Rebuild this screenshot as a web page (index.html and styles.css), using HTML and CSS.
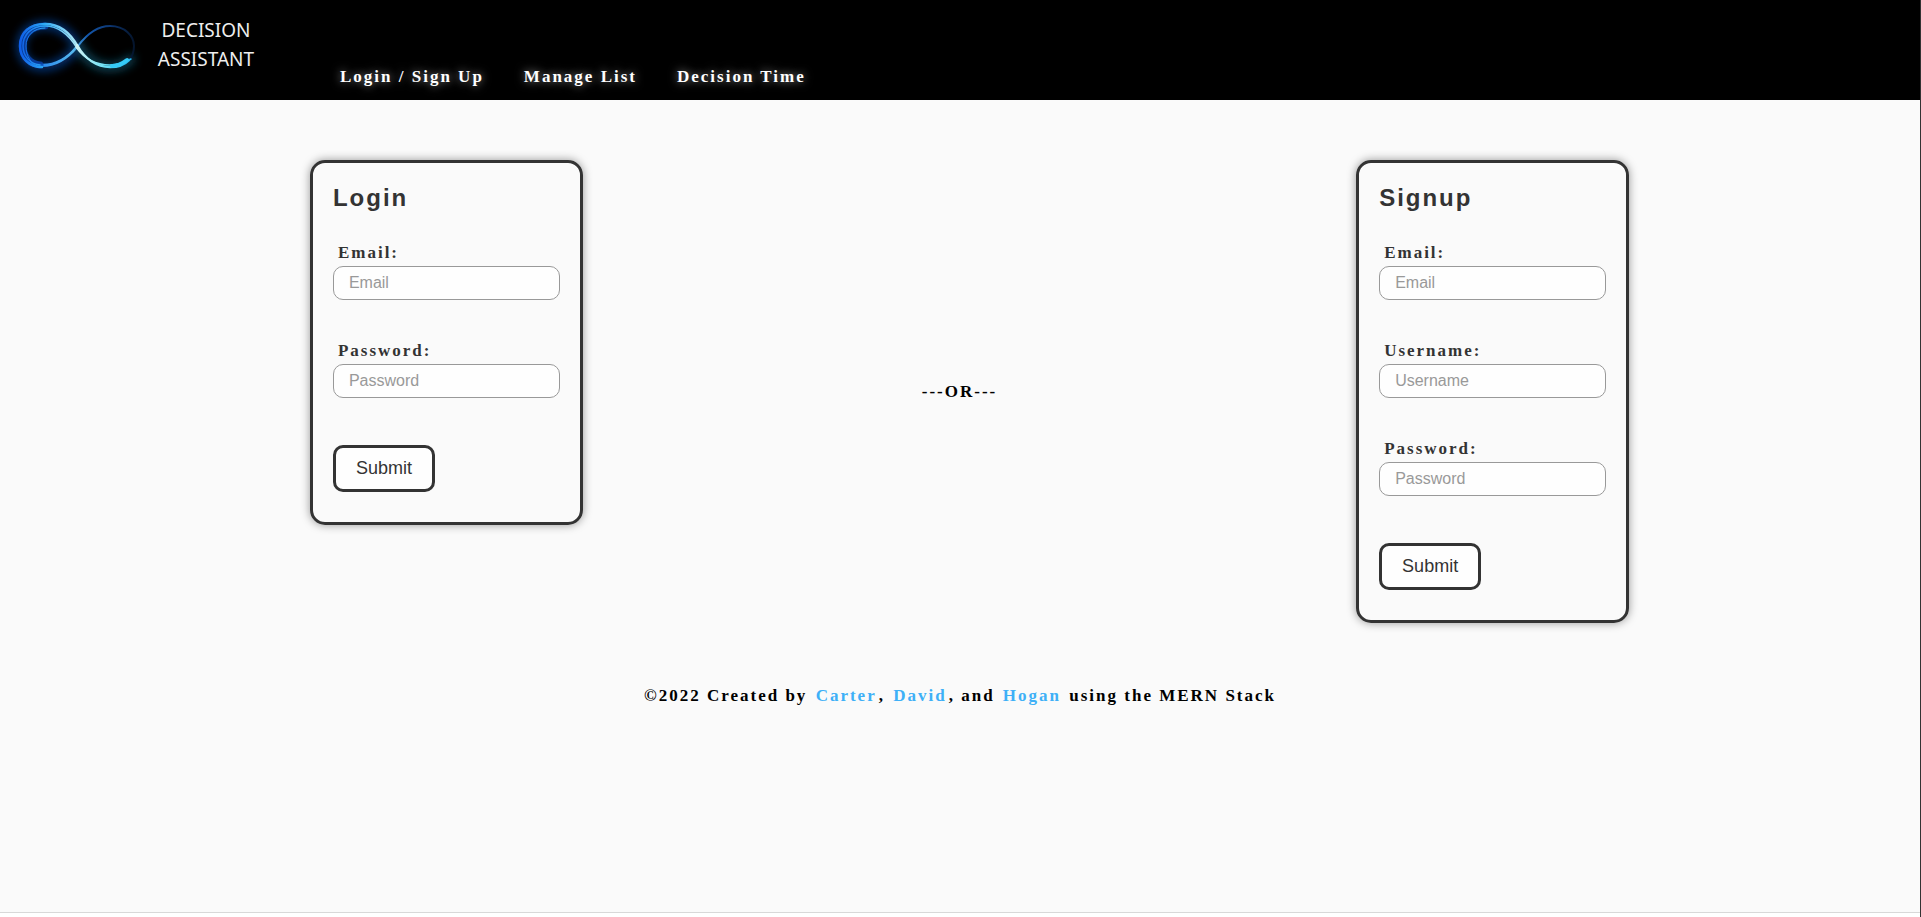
FILE: index.html
```html
<!DOCTYPE html>
<html lang="en">
<head>
  <meta charset="utf-8">
  <title>Decision Assistant</title>
  <link rel="stylesheet" href="styles.css">
</head>
<body>
  <div class="page">
    <header class="header">
      <a class="brand" href="#">
        <svg class="brand-mark" viewBox="0 0 150 100" aria-hidden="true">
          <defs>
            <linearGradient id="left" gradientUnits="userSpaceOnUse" x1="20" y1="0" x2="88" y2="0">
              <stop offset="0" stop-color="#0f5fe8"/>
              <stop offset="0.35" stop-color="#2ba8f5"/>
              <stop offset="0.75" stop-color="#9be2f8"/>
              <stop offset="1" stop-color="#d2f4f4"/>
            </linearGradient>
            <linearGradient id="low" gradientUnits="userSpaceOnUse" x1="76" y1="0" x2="132" y2="0">
              <stop offset="0" stop-color="#d2f4f4"/>
              <stop offset="0.5" stop-color="#6fe0f5"/>
              <stop offset="1" stop-color="#1cb4ef"/>
            </linearGradient>
            <linearGradient id="rise" gradientUnits="userSpaceOnUse" x1="30" y1="0" x2="134" y2="0">
              <stop offset="0" stop-color="#1a78ee"/>
              <stop offset="0.42" stop-color="#55b8ef"/>
              <stop offset="0.55" stop-color="#1458ae"/>
              <stop offset="0.8" stop-color="#0b3168"/>
              <stop offset="1" stop-color="#04142c"/>
            </linearGradient>
            <filter id="glow" x="-30%" y="-60%" width="160%" height="220%">
              <feGaussianBlur stdDeviation="5"/>
            </filter>
          </defs>
          <g fill="none" stroke-linecap="round">
            <g filter="url(#glow)" opacity="0.7" stroke-width="8">
              <path stroke="#0750b8" d="M78 46C70 33 60 25 45 25C30 25 21 34 21 46C21 59 30 67 42 67C58 67 68 58 78 46"/>
              <path stroke="#126a88" d="M78 46C86 60 97 67 110 67C119 67 126 64 131 59"/>
            </g>
            <path stroke="url(#rise)" stroke-width="2" d="M42 66C58 66 69 57 78 46C87 34 97 26 110 26C125 26 134 36 134 46C134 53 132 57 129 60"/>
            <path stroke="url(#rise)" stroke-width="1.5" d="M36 64C55 67 67 58 76 47"/>
            <path stroke="#0a45b0" stroke-width="7" opacity="0.8" d="M40 65C30 64 23 56 23 46C23 35 31 26 45 26"/>
            <path stroke="url(#left)" stroke-width="2.5" d="M42 67C29 67 20 58 20 46C20 32 30 24 45 24C61 24 71 34 78 47"/>
            <path stroke="url(#left)" stroke-width="1.5" d="M40 65C30 64 23 56 23 46C23 35 31 26 45 26C59 26 69 35 77 48"/>
            <path stroke="url(#left)" stroke-width="1" d="M38 67C31 64 26 56 26 46C26 36 33 28 45 28"/>
            <path stroke="url(#low)" stroke-width="2.5" d="M77 45C85 59 97 67 110 67C119 67 125 64 129 60"/>
            <path stroke="url(#low)" stroke-width="1.5" d="M76 47C86 61 98 65 110 65C119 65 125 62 131 59"/>
            <path stroke="#35cbf7" stroke-width="4" d="M112 66C119 66 123 63 127 60"/>
          </g>
        </svg>
        <span class="brand-name">DECISION<br>ASSISTANT</span>
      </a>
      <nav class="nav">
        <a href="#login">Login / Sign Up</a>
        <a href="#list">Manage List</a>
        <a href="#time">Decision Time</a>
      </nav>
    </header>

    <main class="main">
      <form class="card" id="login">
        <h2 class="card-title">Login</h2>
        <div class="field">
          <label for="login-email">Email:</label>
          <input id="login-email" type="email" placeholder="Email">
        </div>
        <div class="field">
          <label for="login-password">Password:</label>
          <input id="login-password" type="password" placeholder="Password">
        </div>
        <button class="submit" type="submit">Submit</button>
      </form>

      <p class="divider">---OR---</p>

      <form class="card" id="signup">
        <h2 class="card-title">Signup</h2>
        <div class="field">
          <label for="signup-email">Email:</label>
          <input id="signup-email" type="email" placeholder="Email">
        </div>
        <div class="field">
          <label for="signup-username">Username:</label>
          <input id="signup-username" type="text" placeholder="Username">
        </div>
        <div class="field">
          <label for="signup-password">Password:</label>
          <input id="signup-password" type="password" placeholder="Password">
        </div>
        <button class="submit" type="submit">Submit</button>
      </form>
    </main>

    <footer class="footer">
      ©2022 Created by <a href="#">Carter</a>, <a href="#">David</a>, and <a href="#">Hogan</a> using the MERN Stack
    </footer>
  </div>
</body>
</html>
```
FILE: styles.css
```css
* {
  box-sizing: border-box;
}

body {
  min-height: 100vh;
  margin: 0;
  background: #fff;
  border-right: 1px solid #333;
  font-family: "Liberation Serif", "Times New Roman", serif;
  font-size: 17px;
  font-weight: bold;
  letter-spacing: 2px;
  line-height: 20px;
  color: #000;
}

.page {
  min-height: calc(100vh - 4px);
  background: #fafafa;
  border-bottom: 1px solid #d8d8d8;
}

.header {
  display: flex;
  height: 100px;
  background: #000;
}

.brand {
  display: flex;
  width: 340px;
  color: #eee;
  text-decoration: none;
}

.brand-mark {
  width: 150px;
  height: 100px;
}

.brand-name {
  width: 112px;
  padding-top: 16px;
  font-family: "Liberation Sans Narrow", "Arial Narrow", "Noto Sans", sans-serif;
  font-size: 19px;
  font-weight: normal;
  letter-spacing: 0;
  line-height: 29px;
  text-align: center;
}

.nav {
  display: flex;
  align-items: flex-end;
  gap: 40px;
  padding-bottom: 13px;
}

.nav a {
  color: #fff;
  text-decoration: none;
  text-shadow: 0 0 10px rgba(255, 255, 255, 0.6);
}

.main {
  display: flex;
  justify-content: space-between;
  align-items: flex-start;
  padding: 60px 15.15% 0 15.1%;
}

.card {
  width: 273px;
  margin-left: 20px;
  padding: 20px 20px 30px;
  border: 3px solid #333;
  border-radius: 15px;
  box-shadow: 0 0 10px rgba(0, 0, 0, 0.4);
  color: #333;
}

.card-title {
  margin: 0 0 30px;
  font-family: "Liberation Sans", Arial, sans-serif;
  font-size: 24px;
  line-height: 30px;
}

.field {
  display: flex;
  flex-direction: column;
  gap: 3px;
  margin-bottom: 41px;
}

.field label {
  padding-left: 5px;
}

.field input {
  width: 100%;
  height: 34px;
  padding: 0 15px;
  border: 1px solid #999;
  border-radius: 10px;
  background: #fefefe;
  color: #333;
  font-family: "Liberation Sans", Arial, sans-serif;
  font-size: 16px;
}

.field input::placeholder {
  color: #999;
}

.submit {
  display: block;
  width: 102px;
  height: 47px;
  margin-top: 47px;
  padding: 0;
  border: 3px solid #333;
  border-radius: 10px;
  background: #fefefe;
  color: #333;
  font-family: "Liberation Sans", Arial, sans-serif;
  font-size: 18px;
}

.divider {
  margin: 0;
  align-self: center;
}

.footer {
  padding-top: 63px;
  text-align: center;
}

.footer a {
  padding: 0 2px;
  color: #3eb0f7;
  text-decoration: none;
}
```
